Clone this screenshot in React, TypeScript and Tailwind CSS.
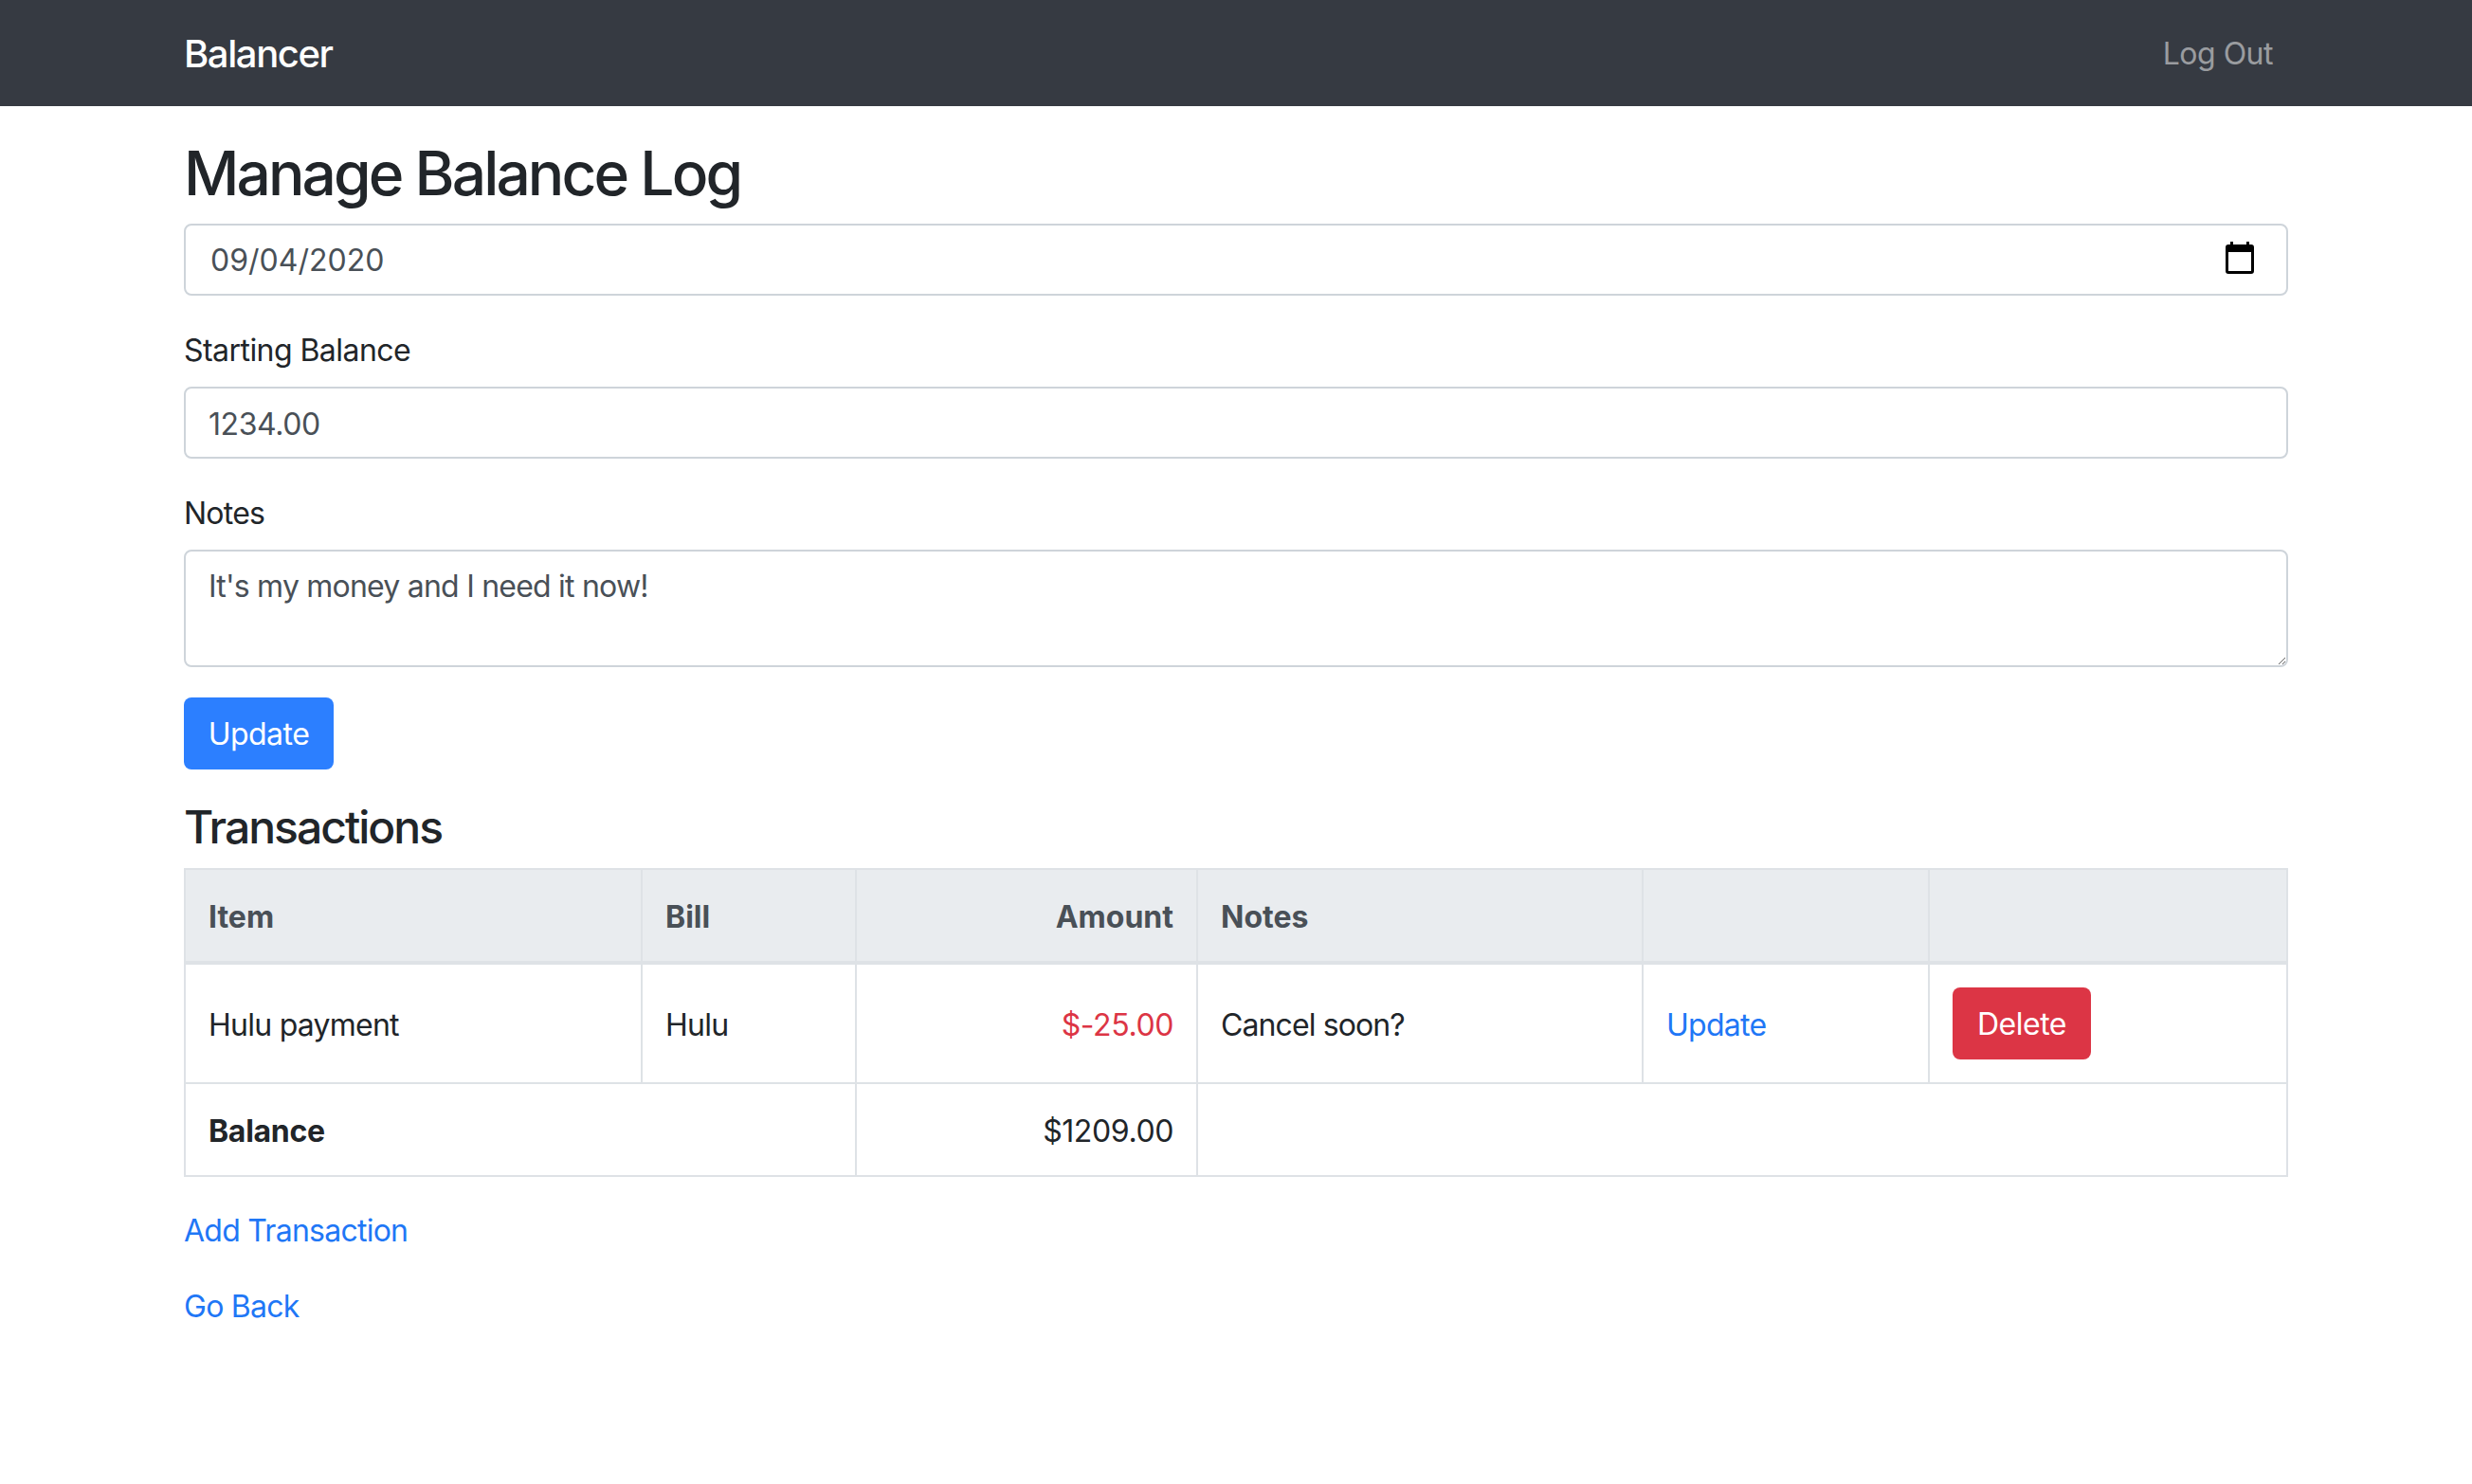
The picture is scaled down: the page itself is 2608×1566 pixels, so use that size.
import React from 'react';

const fieldClass =
  'block w-full h-[76px] px-[24px] pt-[2px] rounded-[8px] border-2 border-[#ced4da] bg-white text-[32px] tracking-[-0.4px] text-[#495057] outline-none';

const CalendarIcon = () => (
  <svg width="30" height="34" viewBox="0 0 30 34" className="block -mt-[6px]">
    <path d="M5 0h3v3h14V0h3v3h2a3 3 0 0 1 3 3v25a3 3 0 0 1-3 3H3a3 3 0 0 1-3-3V6a3 3 0 0 1 3-3h2z M3 11v20h24V11z" fill="#000" fillRule="evenodd" />
  </svg>
);

const cell = 'border-2 border-[#dee2e6] px-[24px] pt-[26px] pb-[22px]';
const head = 'border-2 border-b-4 border-[#dee2e6] bg-[#e9ecef] px-[24px] pt-[26px] pb-[22px] font-bold text-[#495057] text-left';
const link = 'text-[#1f77f6]';

export default function App() {
  return (
    <div className="min-h-screen bg-white text-[32px] leading-[48px] tracking-[-0.75px] text-[#212529] font-['Inter','Liberation_Sans',sans-serif]">
      <nav className="h-[112px] bg-[#363a42]">
        <div className="mx-auto w-[2220px] h-full pt-[2px] flex items-center justify-between">
          <a className="text-[40px] font-medium text-white tracking-[-1.4px]">Balancer</a>
          <a className="px-[16px] tracking-[-0.5px] text-white/50">Log Out</a>
        </div>
      </nav>

      <main className="mx-auto w-[2220px]">
        <h1 className="pt-[33px] mb-[15px] text-[64px] leading-[76px] font-medium tracking-[-2.9px]">Manage Balance Log</h1>

        <div className="mb-[32px] flex items-center justify-between h-[76px] pl-[26px] pr-[34px] pt-[2px] rounded-[8px] border-2 border-[#ced4da] tracking-normal text-[#495057]">
          <span>09/04/2020</span>
          <CalendarIcon />
        </div>

        <div className="mb-[32px]">
          <label className="block pt-[2px] mb-[14px] tracking-[-0.55px]">Starting Balance</label>
          <input className={fieldClass} defaultValue="1234.00" />
        </div>

        <div className="mb-[32px]">
          <label className="block pt-[2px] mb-[14px]">Notes</label>
          <textarea
            className="block w-full h-[124px] px-[24px] pt-[13px] pb-[11px] rounded-[8px] border-2 border-[#ced4da] bg-white text-[32px] leading-[48px] tracking-[-0.78px] text-[#495057] outline-none"
            defaultValue="It's my money and I need it now!"
          />
        </div>

        <button className="block h-[76px] w-[158px] pt-[2px] rounded-[8px] bg-[#2c7fff] text-white tracking-[-0.55px]">Update</button>

        <h2 className="mt-[32px] mb-[14px] text-[48px] leading-[58px] font-medium tracking-[-2px]">Transactions</h2>

        <table className="w-full table-fixed border-collapse">
          <colgroup>
            <col className="w-[482px]" />
            <col className="w-[226px]" />
            <col className="w-[360px]" />
            <col className="w-[470px]" />
            <col className="w-[302px]" />
            <col />
          </colgroup>
          <thead>
            <tr className="tracking-normal">
              <th className={head}>Item</th>
              <th className={head}>Bill</th>
              <th className={`${head} text-right`}>Amount</th>
              <th className={head}>Notes</th>
              <th className={head}></th>
              <th className={head}></th>
            </tr>
          </thead>
          <tbody>
            <tr>
              <td className={cell}>Hulu payment</td>
              <td className={cell}>Hulu</td>
              <td className={`${cell} text-right tracking-[-0.4px] text-[#dc3545]`}>$-25.00</td>
              <td className={`${cell} tracking-[-0.9px]`}>Cancel soon?</td>
              <td className={cell}><a className={link}>Update</a></td>
              <td className="border-2 border-[#dee2e6] p-[24px]">
                <button className="block h-[76px] w-[146px] pt-[2px] rounded-[8px] bg-[#dc3545] text-white tracking-[-0.5px]">Delete</button>
              </td>
            </tr>
            <tr>
              <td colSpan={2} className={`${cell} font-bold tracking-[-0.3px]`}>Balance</td>
              <td className={`${cell} text-right tracking-[-0.4px]`}>$1209.00</td>
              <td colSpan={3} className={cell}></td>
            </tr>
          </tbody>
        </table>

        <p className="mt-[33px] mb-[32px]"><a className={link}>Add Transaction</a></p>
        <p><a className={link}>Go Back</a></p>
      </main>
    </div>
  );
}
